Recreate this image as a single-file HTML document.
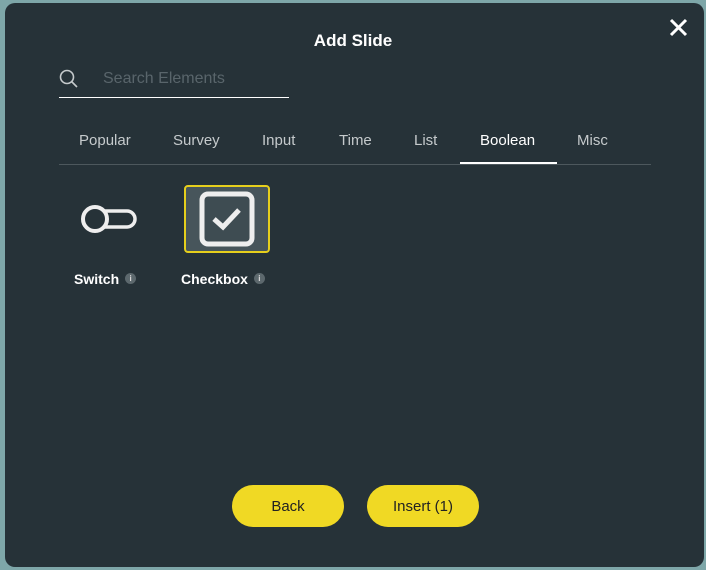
<!DOCTYPE html>
<html><head><style>
body{margin:0;width:706px;height:570px;background:#7ea7a9;font-family:"Liberation Sans",sans-serif;overflow:hidden;position:relative}
.panel{position:absolute;left:5px;top:3px;width:699px;height:564px;background:#263238;border-radius:10px}
.a{position:absolute}
.title{left:0;width:706px;top:31px;text-align:center;color:#fff;font-weight:bold;font-size:17px}
.tab{top:132px;color:#c5cacc;font-size:15px}
.btn{background:#f0d924;border-radius:21px;height:42px;top:485px;width:112px;text-align:center;line-height:44px;font-size:15px;color:#222}
.lbl{color:#fff;font-weight:bold;font-size:14px;top:271px}
.i{display:inline-block;width:11px;height:11px;border-radius:50%;background:#5c686d;color:#ddd;font-size:8px;text-align:center;line-height:11px;vertical-align:3px;margin-left:6px}
</style></head><body>
<div class="panel"></div>
<div class="a title">Add Slide</div>
<svg class="a" style="left:667px;top:16px" width="26" height="24"><path d="M4 4L19 19M19 4L4 19" stroke="#fff" stroke-width="3"/></svg>
<svg class="a" style="left:58px;top:68px" width="22" height="22"><circle cx="9" cy="9" r="6.5" stroke="#c5cacc" stroke-width="1.6" fill="none"/><path d="M13.5 13.5L19 19" stroke="#c5cacc" stroke-width="1.6"/></svg>
<div class="a" style="left:103px;top:70px;color:#59656b;font-size:16px">Search Elements</div>
<div class="a" style="left:59px;top:97px;width:230px;height:1px;background:#fff"></div>
<div class="a tab" style="left:79px">Popular</div>
<div class="a tab" style="left:173px">Survey</div>
<div class="a tab" style="left:262px">Input</div>
<div class="a tab" style="left:339px">Time</div>
<div class="a tab" style="left:414px">List</div>
<div class="a tab" style="left:480px;color:#fff">Boolean</div>
<div class="a tab" style="left:577px">Misc</div>
<div class="a" style="left:59px;top:164px;width:592px;height:1px;background:#4d585d"></div>
<div class="a" style="left:460px;top:162px;width:97px;height:2px;background:#fff"></div>
<svg class="a" style="left:78px;top:200px" width="64" height="38"><rect x="16" y="11" width="41" height="16" rx="8" stroke="#eee" stroke-width="3.5" fill="none"/><circle cx="17" cy="19" r="12" fill="#263238" stroke="#eee" stroke-width="4"/></svg>
<div class="a" style="left:184px;top:185px;width:82px;height:64px;border:2px solid #e6cf1c;border-radius:4px;background:#47555b"></div>
<svg class="a" style="left:199px;top:191px" width="58" height="56"><rect x="3" y="3" width="50" height="50" rx="6" stroke="#eee" stroke-width="5" fill="#3e4c52"/><path d="M15 28L24 36L40 19" stroke="#eee" stroke-width="5" fill="none"/></svg>
<div class="a lbl" style="left:74px">Switch<span class="i">i</span></div>
<div class="a lbl" style="left:181px">Checkbox<span class="i">i</span></div>
<div class="a btn" style="left:232px">Back</div>
<div class="a btn" style="left:367px">Insert (1)</div>
</body></html>
